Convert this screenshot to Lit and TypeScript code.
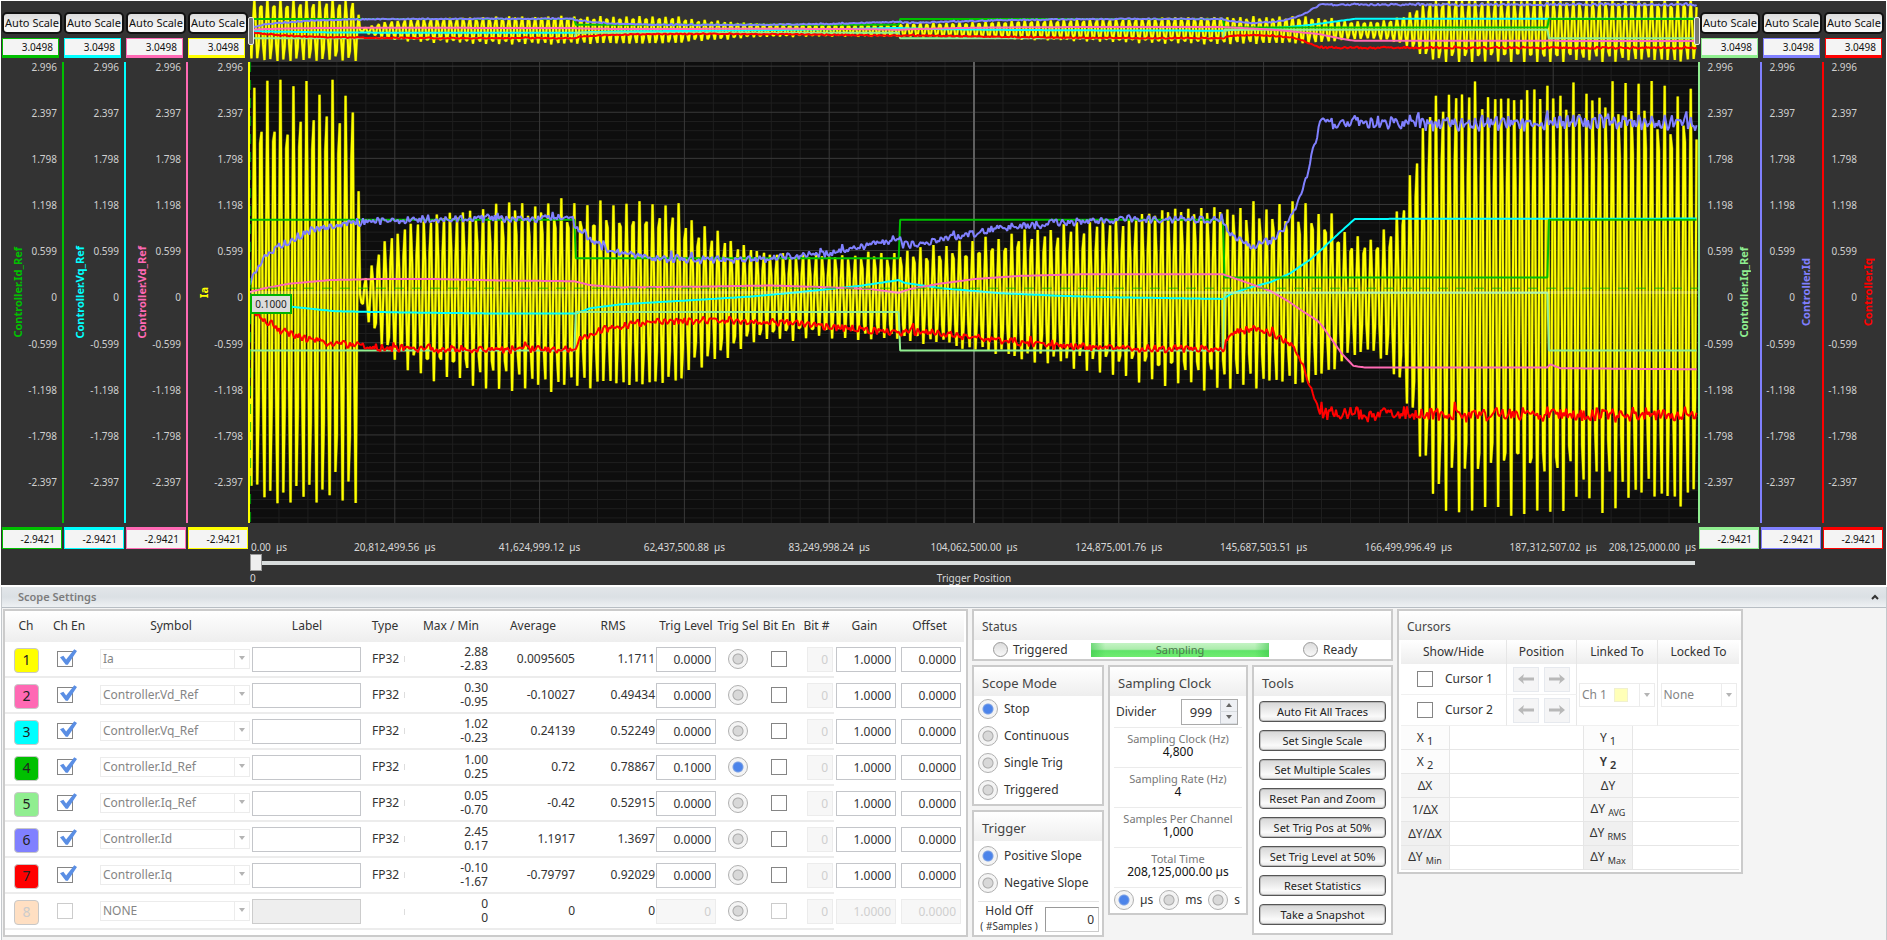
import { LitElement, html, svg, css } from "lit";
import { customElement, property } from "lit/decorators.js";
import { classMap } from "lit/directives/class-map.js";
import { styleMap } from "lit/directives/style-map.js";

type Point = [number, number];

interface Axis {
  name: string;
  color: string;
}

interface Trace {
  color: string;
  width: number;
  values: number[];
}

interface Channel {
  n: number;
  color: string;
  symbol: string;
  type: string;
  max: string;
  min: string;
  avg: string;
  rms: string;
  level: string;
  on: boolean;
}

const SAMPLES = 1000;
const Y_MAX = 3.0498;
const Y_MIN = -2.9421;
const TICKS = [2.996, 2.397, 1.798, 1.198, 0.599, 0, -0.599, -1.198, -1.798, -2.397];

const LEFT_AXES: Axis[] = [
  { name: "Controller.Id_Ref", color: "#00c000" },
  { name: "Controller.Vq_Ref", color: "#00ffff" },
  { name: "Controller.Vd_Ref", color: "#ff69b4" },
  { name: "Ia", color: "#ffff00" },
];

const RIGHT_AXES: Axis[] = [
  { name: "Controller.Iq_Ref", color: "#90ee90" },
  { name: "Controller.Id", color: "#8080ff" },
  { name: "Controller.Iq", color: "#ff0000" },
];

const TIMES = [
  "0.00", "20,812,499.56", "41,624,999.12", "62,437,500.88", "83,249,998.24", "104,062,500.00",
  "124,875,001.76", "145,687,503.51", "166,499,996.49", "187,312,507.02", "208,125,000.00",
];

const CHANNELS: Channel[] = [
  { n: 1, color: "#ffff00", symbol: "Ia", type: "FP32", max: "2.88", min: "-2.83", avg: "0.0095605", rms: "1.1711", level: "0.0000", on: true },
  { n: 2, color: "#ff69b4", symbol: "Controller.Vd_Ref", type: "FP32", max: "0.30", min: "-0.95", avg: "-0.10027", rms: "0.49434", level: "0.0000", on: true },
  { n: 3, color: "#00ffff", symbol: "Controller.Vq_Ref", type: "FP32", max: "1.02", min: "-0.23", avg: "0.24139", rms: "0.52249", level: "0.0000", on: true },
  { n: 4, color: "#00c000", symbol: "Controller.Id_Ref", type: "FP32", max: "1.00", min: "0.25", avg: "0.72", rms: "0.78867", level: "0.1000", on: true },
  { n: 5, color: "#90ee90", symbol: "Controller.Iq_Ref", type: "FP32", max: "0.05", min: "-0.70", avg: "-0.42", rms: "0.52915", level: "0.0000", on: true },
  { n: 6, color: "#8080ff", symbol: "Controller.Id", type: "FP32", max: "2.45", min: "0.17", avg: "1.1917", rms: "1.3697", level: "0.0000", on: true },
  { n: 7, color: "#ff0000", symbol: "Controller.Iq", type: "FP32", max: "-0.10", min: "-1.67", avg: "-0.79797", rms: "0.92029", level: "0.0000", on: true },
  { n: 8, color: "#ffdfc2", symbol: "NONE", type: "", max: "0", min: "0", avg: "0", rms: "0", level: "0", on: false },
];

/* ---------- signal model: key points are [sample, value] ---------- */

function interpolate(points: Point[], n: number): number {
  if (n <= points[0][0]) return points[0][1];
  for (let i = 1; i < points.length; i++) {
    const [x1, y1] = points[i];
    if (n <= x1) {
      const [x0, y0] = points[i - 1];
      return x1 === x0 ? y1 : y0 + ((y1 - y0) * (n - x0)) / (x1 - x0);
    }
  }
  return points[points.length - 1][1];
}

function noiseSource(seed: number): () => number {
  let s = seed;
  return () => {
    s = (s * 1664525 + 1013904223) % 4294967296;
    return (s / 4294967296) * 2 - 1;
  };
}

function series(points: Point[], noise: (n: number) => number = () => 0): number[] {
  return Array.from({ length: SAMPLES }, (_, n) => interpolate(points, n) + noise(n));
}

const rippleNoise = (seed: number, sign: number) => {
  const rnd = noiseSource(seed);
  return (n: number) => {
    const level = n < 12 ? 0.03 : n < 740 ? 0.042 : 0.08;
    const spike = Math.sin(n * 1.39) * 0.35 + rnd() * 1.05;
    return sign * level * (spike + (rnd() > 0.9 ? 1.2 : 0));
  };
};

const PHASE_ENVELOPE: Point[] = [
  [0, 2.84], [74, 2.86], [76, 0.06], [82, 0.38], [92, 0.72], [101, 0.9], [128, 1.14], [153, 1.2], [169, 1.27],
  [205, 1.29], [225, 1.27], [290, 1.27], [298, 1.22], [305, 1.0], [325, 0.87], [342, 0.7], [360, 0.6], [400, 0.57],
  [449, 0.6], [484, 0.7], [505, 0.76], [525, 0.86], [574, 0.98], [608, 1.12], [643, 1.22], [671, 1.26], [730, 1.24],
  [745, 1.12], [750, 1.0], [760, 0.82], [774, 0.78], [786, 0.9], [790, 1.12], [799, 1.46], [808, 2.2], [817, 2.9], [999, 2.88],
];

function phaseCurrent(): number[] {
  const rnd = noiseSource(77);
  const period = 4.509;
  return Array.from({ length: SAMPLES }, (_, n) => {
    const a = interpolate(PHASE_ENVELOPE, n) * (0.95 + rnd() * 0.05);
    return 0.01 + a * Math.cos((2 * Math.PI * (n - 3)) / period);
  });
}

const vd = series([
  [0, 0.06], [10, 0.11], [28, 0.17], [55, 0.215], [90, 0.23], [124, 0.23], [173, 0.21], [224, 0.2], [235, 0.15],
  [256, 0.12], [311, 0.13], [359, 0.145], [401, 0.12], [428, 0.1], [448, 0.05], [456, 0.1], [477, 0.17], [501, 0.23],
  [532, 0.27], [574, 0.29], [672, 0.29], [689, 0.18], [705, 0.07], [717, -0.06], [727, -0.19], [737, -0.31],
  [740, -0.37], [754, -0.74], [762, -0.9], [770, -0.92], [896, -0.92], [898, -0.88], [905, -0.93], [999, -0.945],
]);
const vq = series([
  [0, -0.02], [10, -0.1], [28, -0.13], [59, -0.19], [104, -0.205], [173, -0.22], [225, -0.22], [235, -0.15],
  [256, -0.1], [297, -0.055], [345, 0], [380, 0.06], [421, 0.14], [448, 0.215], [452, 0.18], [477, 0.11],
  [518, 0.045], [560, 0.01], [601, -0.01], [672, -0.03], [677, 0.03], [689, 0.11], [705, 0.19], [718, 0.3],
  [732, 0.48], [741, 0.63], [753, 0.84], [763, 1.01], [999, 1.015],
]);
const idRef = series([[0, 1], [224, 1], [225, 0.5], [448, 0.5], [449, 1], [672, 1], [673, 0.25], [896, 0.25], [897, 1], [999, 1]]);
const iqRef = series([[0, -0.7], [224, -0.7], [225, -0.2], [448, -0.2], [449, -0.7], [672, -0.7], [673, 0.05], [896, 0.05], [897, -0.7], [999, -0.7]]);
const id = series(
  [
    [0, 0.17], [3, 0.32], [10, 0.5], [21, 0.67], [35, 0.8], [48, 0.89], [66, 0.955], [83, 0.98], [138, 1.01],
    [222, 1.02], [225, 0.9], [235, 0.73], [249, 0.59], [270, 0.51], [311, 0.48], [352, 0.49], [380, 0.53],
    [415, 0.6], [435, 0.7], [448, 0.76], [451, 0.67], [463, 0.68], [484, 0.77], [518, 0.89], [553, 0.95],
    [601, 1.0], [672, 1.0], [676, 0.82], [684, 0.72], [693, 0.655], [705, 0.73], [716, 0.93], [724, 1.22],
    [730, 1.58], [737, 2.1], [739, 2.25], [999, 2.26],
  ],
  rippleNoise(5, 1),
);
const iq = series(
  [
    [0, -0.12], [4, -0.22], [8, -0.28], [21, -0.45], [41, -0.55], [55, -0.6], [90, -0.67], [138, -0.69],
    [223, -0.68], [228, -0.56], [242, -0.44], [256, -0.37], [283, -0.32], [325, -0.31], [366, -0.34],
    [415, -0.41], [449, -0.48], [456, -0.45], [477, -0.48], [518, -0.58], [560, -0.64], [601, -0.67],
    [672, -0.685], [675, -0.54], [684, -0.45], [693, -0.43], [705, -0.48], [719, -0.63], [727, -0.9],
    [732, -1.15], [739, -1.52], [999, -1.54],
  ],
  rippleNoise(19, 1),
);
const ia = phaseCurrent();

const TRACES: Trace[] = [
  { color: "#787800", width: 3, values: ia },
  { color: "#ffff00", width: 2, values: ia },
  { color: "#00ffff", width: 2, values: vq },
  { color: "#00c000", width: 2, values: idRef },
  { color: "#90ee90", width: 2, values: iqRef },
  { color: "#ff69b4", width: 2, values: vd },
  { color: "#8080ff", width: 2, values: id },
  { color: "#ff0000", width: 2, values: iq },
];

const linePoints = (values: number[]) => values.map((v, n) => `${n},${(-v * 100).toFixed(1)}`).join(" ");

const drawTraces = () =>
  TRACES.map((t) => svg`<polyline class="trace" points=${linePoints(t.values)} stroke=${t.color} stroke-width=${t.width}></polyline>`);

/* ---------- one vertical scale beside the plot ---------- */

@customElement("scope-axis")
export class ScopeAxis extends LitElement {
  @property() name = "";
  @property() color = "";
  @property({ type: Boolean, reflect: true }) right = false;

  static styles = css`
    :host {
      display: flex;
      flex-direction: column;
      width: 62px;
      font: 10px/10px "Noto Sans", "Open Sans", sans-serif;
      color: #d0d0d0;
    }
    .head {
      height: 61px;
      box-sizing: border-box;
      padding: 11px 2px 0 0;
      display: flex;
      flex-direction: column;
      gap: 4px;
    }
    :host([right]) .head {
      padding: 11px 0 0 2px;
    }
    button {
      height: 22px;
      padding: 0;
      border: 2px solid #111;
      border-radius: 5px;
      background: linear-gradient(#dcdcdc, #f8f8f8 80%);
      font: inherit;
      font-size: 11px;
      color: #111;
      white-space: nowrap;
    }
    input {
      box-sizing: border-box;
      width: 57px;
      height: 20px;
      border: 1px solid var(--axis);
      border-bottom-width: 3px;
      padding: 0 5px 0 0;
      background: #f4f4f4;
      font: inherit;
      color: #111;
      text-align: right;
      border-radius: 0;
    }
    :host([right]) input {
      margin-left: 1px;
    }
    .scale {
      flex: 1;
      min-height: 0;
      display: grid;
      grid-template-columns: 32px 1fr;
      border-right: 2px solid var(--axis);
    }
    :host([right]) .scale {
      grid-template-columns: 33px 1fr;
      border-right: 0;
      border-left: 2px solid var(--axis);
    }
    .name {
      place-self: center;
      writing-mode: vertical-rl;
      transform: rotate(180deg);
      font-size: 11px;
      font-weight: bold;
      color: var(--axis);
      line-height: 14px;
    }
    :host([right]) .name {
      margin-right: 6px;
    }
    ol {
      margin: 0;
      padding: 0 5px 0 0;
      list-style: none;
      display: flex;
      flex-direction: column;
      min-width: 0;
      min-height: 0;
    }
    :host([right]) ol {
      padding: 0;
      order: -1;
    }
    li {
      flex: 0 0 10%;
      min-height: 0;
      display: flex;
      justify-content: flex-end;
      white-space: nowrap;
    }
    .foot {
      height: 62px;
      box-sizing: border-box;
      padding-top: 4px;
    }
    .foot input {
      width: 60px;
      height: 22px;
      border-width: 3px 1px 1px;
      margin: 0;
      padding-right: 6px;
    }
    :host([right]) .foot input {
      margin-left: 1px;
    }
  `;

  render() {
    return html`
      <div class="head" style=${styleMap({ "--axis": this.color })}>
        <button type="button">Auto Scale</button>
        <input aria-label="${this.name} maximum" value="3.0498" />
      </div>
      <div class="scale" style=${styleMap({ "--axis": this.color })}>
        <span class="name">${this.name}</span>
        <ol>
          ${TICKS.map((t) => html`<li>${t === 0 ? "0" : t.toFixed(3)}</li>`)}
        </ol>
      </div>
      <div class="foot" style=${styleMap({ "--axis": this.color })}>
        <input aria-label="${this.name} minimum" value="-2.9421" />
      </div>
    `;
  }
}

/* ---------- plot with overview strip and time scale ---------- */

@customElement("scope-plot")
export class ScopePlot extends LitElement {
  static styles = css`
    :host {
      display: flex;
      flex-direction: column;
      min-width: 0;
      font: 10px/12px "Noto Sans", "Open Sans", sans-serif;
      color: #d8d8d8;
    }
    svg {
      display: block;
      width: 100%;
      height: 100%;
    }
    .trace {
      fill: none;
      vector-effect: non-scaling-stroke;
      stroke-linejoin: bevel;
    }
    .minor,
    .major,
    .center,
    .middle,
    .trigger {
      vector-effect: non-scaling-stroke;
      fill: none;
    }
    .minor {
      stroke: #1f1f1f;
      stroke-width: 1;
    }
    .major {
      stroke: #3a3a3a;
      stroke-width: 1;
    }
    .center {
      stroke: #606060;
      stroke-width: 2;
    }
    .middle {
      stroke: #ffffff;
      stroke-opacity: 0.25;
      stroke-width: 3;
    }
    .trigger {
      stroke: #00b400;
      stroke-opacity: 0.8;
      stroke-width: 1;
      stroke-dasharray: 10 8;
    }
    .overview {
      position: relative;
      height: 61px;
      flex: none;
    }
    .handle {
      position: absolute;
      top: 16px;
      left: -2px;
      width: 4px;
      height: 26px;
      border: 1px solid #e8e8e8;
      border-radius: 2px;
      background: #777;
    }
    .handle.end {
      left: auto;
      right: -2px;
    }
    .plot {
      position: relative;
      flex: 1;
      min-height: 0;
      background: #0e0e0e;
    }
    .plot svg {
      position: absolute;
      inset: 0;
    }
    .level {
      position: absolute;
      left: 0;
      top: 232px;
      width: 42px;
      height: 20px;
      box-sizing: border-box;
      border: 2px solid #00b400;
      background: #dcdcdc;
      color: #222;
      line-height: 16px;
      text-align: center;
    }
    .footer {
      height: 62px;
      flex: none;
      box-sizing: border-box;
      padding-top: 18px;
    }
    ol {
      margin: 0;
      padding: 0;
      list-style: none;
      display: grid;
      grid-template-columns: repeat(10, 1fr);
    }
    li {
      grid-row: 1;
      white-space: pre;
      display: flex;
      justify-content: center;
      box-sizing: border-box;
      margin: 0 50% 0 -50%;
      width: 100%;
    }
    li:first-child {
      grid-column: 1;
      justify-content: flex-start;
      margin: 0 0 0 1px;
    }
    li:nth-child(2) {
      grid-column: 2;
    }
    li:nth-child(10) {
      grid-column: 10;
    }
    li:last-child {
      grid-column: 10;
      justify-content: flex-end;
      margin: 0;
      padding-right: 2px;
    }
    input {
      appearance: none;
      display: block;
      width: 100%;
      height: 17px;
      margin: 1px 0 0;
      padding-right: 3px;
      box-sizing: border-box;
      background: linear-gradient(#d8dcdc, #d8dcdc) 0 7px / calc(100% - 3px) 4px no-repeat;
      outline: none;
    }
    input::-webkit-slider-thumb {
      appearance: none;
      width: 12px;
      height: 17px;
      background: #eee;
      border: 1px solid #999;
    }
    .caption {
      display: grid;
      grid-template-columns: 1fr auto 1fr;
      line-height: 14px;
    }
  `;

  render() {
    const height = (Y_MAX - Y_MIN) * 100;
    const top = -Y_MAX * 100;
    const bottom = -Y_MIN * 100;
    const step = 0.59915 / 5;
    const rows = Array.from({ length: 50 }, (_, i) => ({ y: -(2.9957 - i * step) * 100, major: i % 5 === 0 }));
    const cols = Array.from({ length: 50 }, (_, i) => ({ x: (i * SAMPLES) / 50, major: i % 5 === 0 })).slice(1);
    const mid = (top + bottom) / 2;
    return html`
      <div class="overview">
        <svg viewBox="0 -258 ${SAMPLES} 536" preserveAspectRatio="none">${drawTraces()}</svg>
        <span class="handle"></span>
        <span class="handle end"></span>
      </div>
      <div class="plot">
        <svg viewBox="0 ${top} ${SAMPLES} ${height}" preserveAspectRatio="none">
          ${[false, true].map((major) => [
            ...rows.filter((r) => r.major === major).map((r) => svg`<path class=${major ? "major" : "minor"} d="M0 ${r.y}H${SAMPLES}"></path>`),
            ...cols.filter((c) => c.major === major).map((c) => svg`<path class=${major ? "major" : "minor"} d="M${c.x} ${top}V${bottom}"></path>`),
          ])}
          <path class="center" d="M${SAMPLES / 2} ${top}V${bottom}"></path>
          ${drawTraces()}
          <path class="middle" d="M0 ${mid}H${SAMPLES}"></path>
          <path class="trigger" d="M0 -11H${SAMPLES}M0.4 ${top}V${bottom}"></path>
        </svg>
        <span class="level">0.1000</span>
      </div>
      <div class="footer">
        <ol>
          ${TIMES.map((t) => html`<li>${t}  µs</li>`)}
        </ol>
        <input type="range" min="0" max="100" value="0" aria-label="Trigger Position" />
        <div class="caption"><span>0</span><span>Trigger Position</span></div>
      </div>
    `;
  }
}

/* ---------- page ---------- */

@customElement("app-root")
export class AppRoot extends LitElement {
  static styles = css`
    :host {
      display: flex;
      flex-direction: column;
      box-sizing: border-box;
      height: 100vh;
      min-height: 700px;
      padding: 1px 0 0 1px;
      background: #fff;
      font: 12px/14px "Noto Sans", "Open Sans", sans-serif;
      color: #333;
    }
    .scope {
      flex: 1;
      min-height: 0;
      display: flex;
      background: #333;
      padding-left: 1px;
      margin-right: 1px;
    }
    .axes {
      display: flex;
    }
    .axes.end {
      width: 188px;
      position: relative;
    }
    scope-plot {
      flex: 1;
    }
    .settings {
      flex: none;
      margin-top: 2px;
      border: solid #c4c8cc;
      border-width: 0 1px;
      background: #f4f4f4;
    }
    .bar {
      display: flex;
      justify-content: space-between;
      align-items: center;
      height: 20px;
      padding: 0 6px 0 16px;
      border-bottom: 1px solid #b8bec4;
      background: linear-gradient(#e2e6e9, #dbe0e4 50%, #eef1f3);
    }
    h1 {
      margin: 0;
      font-size: 11px;
      line-height: 14px;
      font-weight: 600;
      color: #7c7c7c;
    }
    .fold {
      border: 0;
      background: none;
      padding: 0;
      width: 10px;
      height: 14px;
    }
    .fold svg {
      display: block;
      width: 8px;
      height: 6px;
      margin: 4px 1px;
    }
    .panels {
      display: flex;
      align-items: flex-start;
      gap: 4px;
      padding: 1px 0 3px 1px;
    }
    .panel {
      box-sizing: border-box;
      border: 2px solid #cbcbcb;
      background: #fff;
    }
    .panel h2 {
      margin: 0;
      padding: 4px 8px 0;
      height: 29px;
      box-sizing: border-box;
      line-height: 24px;
      font-size: 13px;
      font-weight: 400;
      color: #444;
      background: linear-gradient(#fff, #eee);
    }
    .panel h2.small {
      font-size: 12px;
    }
    button,
    input,
    select {
      font: inherit;
      color: inherit;
    }

    /* channel table */
    .channels {
      width: 965px;
      height: 328px;
    }
    .grid {
      width: 959px;
      table-layout: fixed;
      border-collapse: separate;
      border-spacing: 0;
    }
    th,
    td {
      box-sizing: border-box;
      padding: 0;
      white-space: nowrap;
    }
    .grid th {
      height: 31px;
      padding-bottom: 2px;
      font-weight: 400;
      text-align: center;
    }
    .grid thead {
      background: linear-gradient(#fff, #eee);
    }
    .grid td {
      height: 36px;
      border-bottom: 2px solid #ececec;
    }
    .grid td.open {
      border-bottom-color: transparent;
    }
    .c42 { width: 42px; }
    .c44 { width: 44px; }
    .c160 { width: 160px; }
    .c112 { width: 112px; }
    .c88 { width: 88px; }
    .c80 { width: 80px; }
    .c62 { width: 62px; }
    .c40 { width: 40px; }
    .c35 { width: 35px; }
    .c65 { width: 65px; }
    .grid th.early {
      padding-right: 4px;
    }
    .badge {
      display: block;
      box-sizing: border-box;
      width: 25px;
      height: 25px;
      margin: 2px 0 0 9px;
      border: 1px solid #c8c8c8;
      border-radius: 4px;
      font-size: 14px;
      line-height: 22px;
      text-align: center;
      color: #222;
    }
    .off .badge {
      color: #ccc;
    }
    .num {
      text-align: right;
    }
    td.maxmin {
      padding-right: 7px;
    }
    td.maxmin span {
      display: block;
      line-height: 14px;
    }
    td.type {
      padding-left: 9px;
      border-right: 0;
    }
    td.type span {
      display: inline-block;
      width: 32px;
      height: 6px;
      line-height: 6px;
      border-right: 1px solid #ddd;
    }
    .grid td.enable {
      padding-left: 10px;
    }
    .middle {
      text-align: center;
    }
    .field {
      display: block;
      box-sizing: border-box;
      height: 25px;
      width: 60px;
      margin: 1px 0 0 2px;
      padding: 0 4px;
      border: 1px solid #c4c6ca;
      border-radius: 0;
      background: #fff;
      text-align: right;
    }
    .field.text {
      width: 109px;
      margin-left: 1px;
      text-align: left;
    }
    .field.level {
      margin-left: 1px;
    }
    .field.bit {
      width: 26px;
      margin-left: 8px;
    }
    .field:disabled {
      background: #f7f7f7;
      border-color: #ececec;
      color: #cfcfcf;
    }
    .field.text:disabled {
      background: #eee;
      border-color: #ccc;
    }
    .pick {
      position: relative;
      display: block;
      width: 150px;
      height: 20px;
      box-sizing: border-box;
      border: 1px solid #ececec;
      margin-left: 9px;
    }
    .pick::before {
      content: "";
      position: absolute;
      right: 0;
      top: 0;
      bottom: 0;
      width: 14px;
      border-left: 1px solid #ececec;
      pointer-events: none;
    }
    .pick::after {
      content: "";
      position: absolute;
      right: 4px;
      top: 6px;
      border: solid transparent;
      border-width: 4px 3px 0;
      border-top-color: #b4b4b4;
      pointer-events: none;
    }
    .pick select {
      appearance: none;
      display: block;
      width: 100%;
      height: 100%;
      padding: 0 0 0 2px;
      border: 0;
      border-radius: 0;
      background: none;
      color: #858585;
      opacity: 1;
    }
    .pick.tall {
      width: 76px;
      height: 24px;
      margin: 0 auto;
    }
    .pick.tall::after {
      top: 9px;
    }
    .swatch {
      position: absolute;
      left: 34px;
      top: 4px;
      width: 14px;
      height: 14px;
      background: #ffffb8;
      border: 1px solid #f0f0d0;
      box-sizing: border-box;
      pointer-events: none;
    }
    input[type="checkbox"] {
      appearance: none;
      position: relative;
      display: inline-block;
      vertical-align: middle;
      box-sizing: border-box;
      width: 16px;
      height: 16px;
      margin: 0;
      border: 1px solid #858585;
      background: #fff;
    }
    input[type="checkbox"]:checked::before {
      content: "";
      position: absolute;
      left: 2px;
      top: -3px;
      width: 17px;
      height: 16px;
      background: #5a8ee4;
      clip-path: polygon(0 52%, 20% 42%, 36% 66%, 84% 2%, 100% 12%, 46% 98%, 34% 98%);
    }
    input[type="checkbox"]:disabled {
      border-color: #ccc;
    }
    input[type="radio"] {
      appearance: none;
      flex: none;
      display: inline-block;
      vertical-align: middle;
      box-sizing: border-box;
      width: 20px;
      height: 20px;
      margin: 0;
      border: 1px solid #b0b0b0;
      border-radius: 50%;
      background: radial-gradient(circle, #d8d8d8 0 4px, #aaa 5px, #f4f4f4 6px);
    }
    input[type="radio"]:checked {
      background: radial-gradient(circle, #4c84ea 0 4px, #7ea2e4 5px, #f4f4f4 6px);
    }

    /* control column */
    .controls {
      display: grid;
      grid-template-columns: 132px 140px 141px;
      gap: 4px;
      align-items: start;
    }
    .status {
      grid-column: 1 / -1;
      height: 52px;
    }
    .lamps {
      display: grid;
      grid-template-columns: 98px 178px 1fr;
      align-items: center;
      padding: 2px 0 0 19px;
    }
    .lamp {
      display: flex;
      align-items: center;
      gap: 5px;
    }
    .lamp::before {
      content: "";
      box-sizing: border-box;
      width: 15px;
      height: 15px;
      border: 1px solid #999;
      border-radius: 50%;
      background: linear-gradient(#ddd, #f8f8f8);
    }
    .ready {
      margin-left: 34px;
    }
    .progress {
      height: 14px;
      line-height: 14px;
      font-size: 11px;
      text-align: center;
      color: #4c7c4c;
      background: linear-gradient(90deg, #3cc84c99, transparent 8%, transparent 92%, #3cc84c99),
        linear-gradient(#c4f4c4, #acecac 45%, #60e468 55%, #70ec70);
    }
    .stack {
      display: grid;
      gap: 4px;
    }
    .mode {
      height: 141px;
    }
    .trigger {
      height: 127px;
    }
    .choices {
      display: grid;
      gap: 7px;
      padding: 3px 4px 0;
    }
    .choices label {
      display: flex;
      align-items: center;
      gap: 6px;
    }
    .trigger .choices {
      padding-top: 5px;
    }
    .hold {
      display: flex;
      justify-content: space-between;
      margin: 8px 3px 0 4px;
      border-top: 1px solid #e4e4e4;
    }
    .hold label {
      text-align: center;
      width: 62px;
      padding-top: 1px;
      line-height: 16px;
    }
    .hold small {
      display: block;
      font-size: 10px;
      line-height: 14px;
      white-space: nowrap;
    }
    .hold .field {
      width: 54px;
      margin: 5px 0 0;
      border-color: #999 #ccc #ccc #999;
    }
    .clock {
      height: 250px;
    }
    .divider {
      display: flex;
      align-items: center;
      justify-content: space-between;
      height: 31px;
      padding: 0 8px 0 6px;
    }
    .spin {
      display: flex;
      box-sizing: border-box;
      width: 57px;
      height: 26px;
      border: 1px solid #aaa;
    }
    .spin input {
      appearance: textfield;
      width: 38px;
      box-sizing: border-box;
      padding: 0;
      border: 0;
      text-align: center;
      font-size: 13px;
      outline: none;
    }
    .spin input::-webkit-inner-spin-button {
      appearance: none;
      margin: 0;
    }
    .steps {
      display: grid;
      flex: 1;
    }
    .steps button {
      padding: 0;
      border: 0;
      border-left: 1px solid #c8ccd4;
      border-bottom: 1px solid #d8dce0;
      background: #eef0f4;
      display: grid;
      place-items: center;
    }
    .steps svg {
      width: 6px;
      height: 4px;
      fill: #666;
    }
    dl {
      margin: 0;
    }
    .fact {
      height: 40px;
      box-sizing: border-box;
      margin: 0 4px;
      padding-top: 4px;
      border-top: 1px solid #ebebeb;
      text-align: center;
    }
    dt {
      font-size: 11px;
      line-height: 13px;
      color: #777;
    }
    dd {
      margin: 0;
      line-height: 13px;
      color: #111;
    }
    .units {
      display: flex;
      gap: 6px;
      margin: 0 4px;
      padding-top: 2px;
      border-top: 1px solid #ebebeb;
    }
    .units label {
      display: flex;
      align-items: center;
      gap: 6px;
    }
    .tools {
      height: 270px;
    }
    .buttons {
      display: grid;
      gap: 8px;
      padding: 5px 5px 0;
    }
    .buttons button {
      height: 21px;
      padding: 0;
      border: 1px solid #555;
      border-radius: 4px;
      background: linear-gradient(#d6d6d6, #fafafa 75%, #e8e8e8);
      box-shadow: inset 0 0 0 1px #9c9c9c88;
      font-size: 11px;
      color: #222;
    }

    /* cursor panel */
    .cursors {
      width: 346px;
      height: 265px;
    }
    .cursors table {
      width: 338px;
      margin: 0 2px;
      table-layout: fixed;
      border-collapse: separate;
      border-spacing: 0;
    }
    .cursors thead th {
      height: 24px;
      font-weight: 400;
      border-right: 1px solid #e6e6e6;
      background: linear-gradient(#fff, #eee);
    }
    .w106 { width: 106px; }
    .w70 { width: 70px; }
    .w81 { width: 81px; }
    .w49 { width: 49px; }
    .w134 { width: 134px; }
    .setup td {
      height: 31px;
      border-right: 1px solid #e8e8e8;
      border-bottom: 1px solid #f0f0f0;
    }
    .setup label {
      display: flex;
      align-items: center;
      gap: 12px;
      padding-left: 16px;
    }
    .arrows {
      display: flex;
      justify-content: center;
      gap: 5px;
    }
    .arrows button {
      width: 26px;
      height: 25px;
      padding: 0;
      border: 1px solid #e6e9ee;
      background: #f5f5f6;
      display: grid;
      place-items: center;
    }
    .arrows svg {
      width: 16px;
      height: 10px;
      fill: #b8b8b8;
    }
    .results th {
      font-weight: 400;
      text-align: center;
      background: #f6f6f6;
      border-right: 1px solid #e6e6e6;
    }
    .results tr:nth-child(-n + 2) th {
      background: #fcfcfc;
    }
    .results tr:nth-child(n + 5) th {
      background: #f0f0f0;
    }
    .results th,
    .results td {
      height: 24px;
      border-bottom: 1px solid #e6e6e6;
    }
    .results td {
      border-right: 1px solid #e6e6e6;
    }
    .cursors thead th:last-child,
    .results td:last-child,
    .cursors td.last {
      border-right: 0;
    }
    .results sub {
      font-size: 9px;
      line-height: 9px;
      vertical-align: -3px;
    }
    .results sub.digit {
      font-size: 11px;
    }
    .results .strong {
      font-weight: 600;
    }
  `;

  private row(c: Channel) {
    return html`
      <tr class=${classMap({ off: !c.on })}>
        <td><span class="badge" style=${styleMap({ background: c.color })}>${c.n}</span></td>
        <td class="enable"><input type="checkbox" aria-label="Enable channel ${c.n}" ?checked=${c.on} ?disabled=${!c.on} /></td>
        <td>
          <span class="pick">
            <select disabled aria-label="Symbol of channel ${c.n}">
              <option>${c.symbol}</option>
            </select>
          </span>
        </td>
        <td><input class="field text" aria-label="Label of channel ${c.n}" ?disabled=${!c.on} /></td>
        <td class="type"><span>${c.type}</span></td>
        <td class="num maxmin"><span>${c.max}</span><span>${c.min}</span></td>
        <td class="num">${c.avg}</td>
        <td class="num">${c.rms}</td>
        <td><input class="field level" aria-label="Trigger level of channel ${c.n}" value=${c.level} ?disabled=${!c.on} /></td>
        <td class="middle"><input type="radio" name="trigger-source" aria-label="Trigger on channel ${c.n}" ?checked=${c.n === 4} /></td>
        <td class="middle"><input type="checkbox" aria-label="Bit enable of channel ${c.n}" ?disabled=${!c.on} /></td>
        <td><input class="field bit" aria-label="Bit number of channel ${c.n}" value="0" disabled /></td>
        <td class="open"><input class="field" aria-label="Gain of channel ${c.n}" value="1.0000" ?disabled=${!c.on} /></td>
        <td class="open"><input class="field" aria-label="Offset of channel ${c.n}" value="0.0000" ?disabled=${!c.on} /></td>
      </tr>
    `;
  }

  private choice(group: string, label: string, checked = false) {
    return html`<label><input type="radio" name=${group} ?checked=${checked} />${label}</label>`;
  }

  private fact(term: string, value: string) {
    return html`<div class="fact"><dt>${term}</dt><dd>${value}</dd></div>`;
  }

  private arrows() {
    return html`
      <div class="arrows">
        <button type="button" disabled aria-label="Move left">
          <svg viewBox="0 0 16 10"><path d="M0 5L6 0L5 3.5H16V6.5H5L6 10Z"></path></svg>
        </button>
        <button type="button" disabled aria-label="Move right">
          <svg viewBox="0 0 16 10"><path d="M16 5L10 0L11 3.5H0V6.5H11L10 10Z"></path></svg>
        </button>
      </div>
    `;
  }

  private channelPanel() {
    return html`
      <section class="panel channels">
        <table class="grid">
          <thead>
            <tr>
              <th class="c42">Ch</th>
              <th class="c44">Ch En</th>
              <th class="c160">Symbol</th>
              <th class="c112">Label</th>
              <th class="c44">Type</th>
              <th class="c88">Max / Min</th>
              <th class="c80 early">Average</th>
              <th class="c80 early">RMS</th>
              <th class="c62">Trig Level</th>
              <th class="c42">Trig Sel</th>
              <th class="c40">Bit En</th>
              <th class="c35">Bit #</th>
              <th class="c65 early">Gain</th>
              <th class="c65 early">Offset</th>
            </tr>
          </thead>
          <tbody>
            ${CHANNELS.map((c) => this.row(c))}
          </tbody>
        </table>
      </section>
    `;
  }

  private controlPanels() {
    const tools = [
      "Auto Fit All Traces", "Set Single Scale", "Set Multiple Scales", "Reset Pan and Zoom",
      "Set Trig Pos at 50%", "Set Trig Level at 50%", "Reset Statistics", "Take a Snapshot",
    ];
    return html`
      <div class="controls">
        <section class="panel status">
          <h2 class="small">Status</h2>
          <div class="lamps">
            <span class="lamp">Triggered</span>
            <div class="progress" role="progressbar" aria-label="Sampling">Sampling</div>
            <span class="lamp ready">Ready</span>
          </div>
        </section>
        <div class="stack">
          <section class="panel mode">
            <h2>Scope Mode</h2>
            <div class="choices">
              ${this.choice("mode", "Stop", true)} ${this.choice("mode", "Continuous")}
              ${this.choice("mode", "Single Trig")} ${this.choice("mode", "Triggered")}
            </div>
          </section>
          <section class="panel trigger">
            <h2>Trigger</h2>
            <div class="choices">
              ${this.choice("slope", "Positive Slope", true)} ${this.choice("slope", "Negative Slope")}
            </div>
            <div class="hold">
              <label for="hold">Hold Off<small>( #Samples )</small></label>
              <input id="hold" class="field" value="0" />
            </div>
          </section>
        </div>
        <section class="panel clock">
          <h2>Sampling Clock</h2>
          <div class="divider">
            <label for="divider">Divider</label>
            <span class="spin">
              <input id="divider" type="number" value="999" />
              <span class="steps">
                <button type="button" aria-label="Increase"><svg viewBox="0 0 6 4"><path d="M0 4L3 0L6 4Z"></path></svg></button>
                <button type="button" aria-label="Decrease"><svg viewBox="0 0 6 4"><path d="M0 0L3 4L6 0Z"></path></svg></button>
              </span>
            </span>
          </div>
          <dl>
            ${this.fact("Sampling Clock (Hz)", "4,800")} ${this.fact("Sampling Rate (Hz)", "4")}
            ${this.fact("Samples Per Channel", "1,000")} ${this.fact("Total Time", "208,125,000.00 µs")}
          </dl>
          <div class="units">
            ${this.choice("unit", "µs", true)} ${this.choice("unit", "ms")} ${this.choice("unit", "s")}
          </div>
        </section>
        <section class="panel tools">
          <h2>Tools</h2>
          <div class="buttons">${tools.map((t) => html`<button type="button">${t}</button>`)}</div>
        </section>
      </div>
    `;
  }

  private cursorPanel() {
    const digit = (base: string, n: string) => html`${base} <sub class="digit">${n}</sub>`;
    const word = (base: string, w: string) => html`${base} <sub>${w}</sub>`;
    const results = [
      [digit("X", "1"), digit("Y", "1")],
      [digit("X", "2"), digit("Y", "2")],
      ["ΔX", "ΔY"],
      ["1/ΔX", word("ΔY", "AVG")],
      ["ΔY/ΔX", word("ΔY", "RMS")],
      [word("ΔY", "Min"), word("ΔY", "Max")],
    ];
    return html`
      <section class="panel cursors">
        <h2 class="small">Cursors</h2>
        <table class="setup">
          <thead>
            <tr>
              <th class="w106">Show/Hide</th>
              <th class="w70">Position</th>
              <th class="w81">Linked To</th>
              <th class="w81">Locked To</th>
            </tr>
          </thead>
          <tbody>
            <tr>
              <td><label><input type="checkbox" />Cursor 1</label></td>
              <td>${this.arrows()}</td>
              <td rowspan="2">
                <span class="pick tall">
                  <select disabled aria-label="Linked to"><option>Ch 1</option></select>
                  <i class="swatch"></i>
                </span>
              </td>
              <td rowspan="2" class="last">
                <span class="pick tall">
                  <select disabled aria-label="Locked to"><option>None</option></select>
                </span>
              </td>
            </tr>
            <tr>
              <td><label><input type="checkbox" />Cursor 2</label></td>
              <td>${this.arrows()}</td>
            </tr>
          </tbody>
        </table>
        <table class="results">
          <tbody>
            ${results.map(
              ([x, y], i) => html`
                <tr>
                  <th class="w49" scope="row">${x}</th>
                  <td class="w134"></td>
                  <th class=${classMap({ w49: true, strong: i === 1 })} scope="row">${y}</th>
                  <td></td>
                </tr>
              `,
            )}
          </tbody>
        </table>
      </section>
    `;
  }

  render() {
    return html`
      <main class="scope">
        <div class="axes">${LEFT_AXES.map((a) => html`<scope-axis .name=${a.name} .color=${a.color}></scope-axis>`)}</div>
        <scope-plot></scope-plot>
        <div class="axes end">
          ${RIGHT_AXES.map((a) => html`<scope-axis right .name=${a.name} .color=${a.color}></scope-axis>`)}
        </div>
      </main>
      <section class="settings">
        <header class="bar">
          <h1>Scope Settings</h1>
          <button class="fold" type="button" aria-label="Collapse settings">
            <svg viewBox="0 0 8 6"><path d="M1 5L4 2L7 5" fill="none" stroke="#333" stroke-width="2"></path></svg>
          </button>
        </header>
        <div class="panels">${this.channelPanel()} ${this.controlPanels()} ${this.cursorPanel()}</div>
      </section>
    `;
  }
}
